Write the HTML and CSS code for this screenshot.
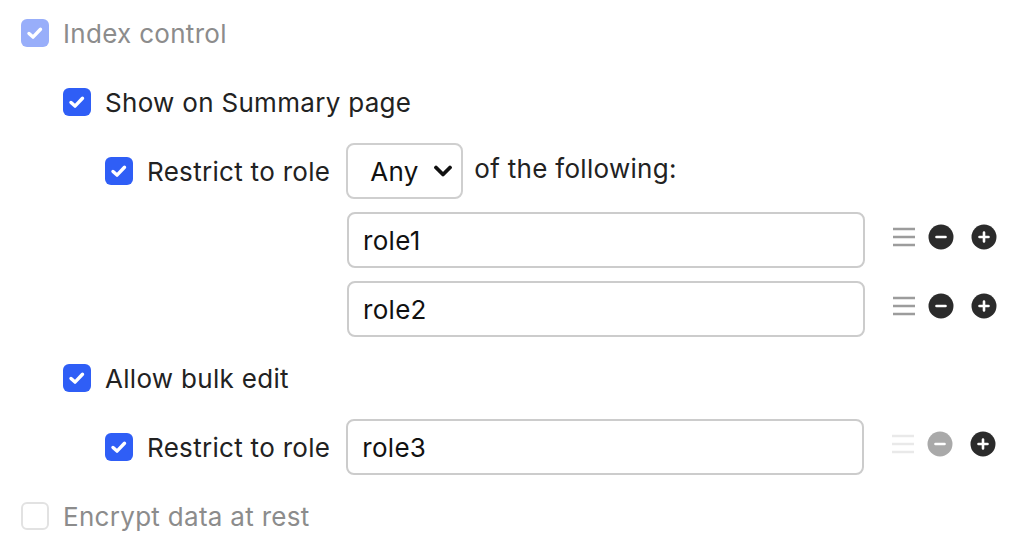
FILE: index.html
```html
<!DOCTYPE html>
<html>
<head>
<meta charset="utf-8">
<link rel="stylesheet" href="styles.css">
</head>
<body>
<div class="form">
  <div class="row lvl0 disabled">
    <span class="cb checked dim"><svg viewBox="0 0 28 28"><path d="M8 14.5l4 3.6 7.5-7.8" /></svg></span>
    <span class="label">Index control</span>
  </div>
  <div class="row lvl1">
    <span class="cb checked"><svg viewBox="0 0 28 28"><path d="M8 14.5l4 3.6 7.5-7.8" /></svg></span>
    <span class="label">Show on Summary page</span>
  </div>
  <div class="row lvl2">
    <span class="cb checked"><svg viewBox="0 0 28 28"><path d="M8 14.5l4 3.6 7.5-7.8" /></svg></span>
    <span class="label">Restrict to role</span>
    <span class="select"><span>Any</span><svg class="chev" viewBox="0 0 20 12"><path d="M3 2.5l7 7 7-7" /></svg></span>
    <span class="label after">of the following:</span>
  </div>
  <div class="row field-row">
    <span class="input">role1</span>
    <span class="tools">
      <svg class="grip" viewBox="0 0 22 20"><path d="M0 2h22M0 10h22M0 18h22" /></svg>
      <svg class="circ" viewBox="0 0 26 26"><circle cx="13" cy="13" r="12.5" /><path d="M8.5 13h9" /></svg>
      <svg class="circ" viewBox="0 0 26 26"><circle cx="13" cy="13" r="12.5" /><path d="M8.5 13h9M13 8.5v9" /></svg>
    </span>
  </div>
  <div class="row field-row">
    <span class="input">role2</span>
    <span class="tools">
      <svg class="grip" viewBox="0 0 22 20"><path d="M0 2h22M0 10h22M0 18h22" /></svg>
      <svg class="circ" viewBox="0 0 26 26"><circle cx="13" cy="13" r="12.5" /><path d="M8.5 13h9" /></svg>
      <svg class="circ" viewBox="0 0 26 26"><circle cx="13" cy="13" r="12.5" /><path d="M8.5 13h9M13 8.5v9" /></svg>
    </span>
  </div>
  <div class="row lvl1">
    <span class="cb checked"><svg viewBox="0 0 28 28"><path d="M8 14.5l4 3.6 7.5-7.8" /></svg></span>
    <span class="label">Allow bulk edit</span>
  </div>
  <div class="row lvl2">
    <span class="cb checked"><svg viewBox="0 0 28 28"><path d="M8 14.5l4 3.6 7.5-7.8" /></svg></span>
    <span class="label">Restrict to role</span>
    <span class="input inline">role3</span>
    <span class="tools">
      <svg class="grip faint" viewBox="0 0 22 20"><path d="M0 2h22M0 10h22M0 18h22" /></svg>
      <svg class="circ off" viewBox="0 0 26 26"><circle cx="13" cy="13" r="12.5" /><path d="M8.5 13h9" /></svg>
      <svg class="circ" viewBox="0 0 26 26"><circle cx="13" cy="13" r="12.5" /><path d="M8.5 13h9M13 8.5v9" /></svg>
    </span>
  </div>
  <div class="row lvl0 disabled">
    <span class="cb empty"></span>
    <span class="label">Encrypt data at rest</span>
  </div>
</div>
</body>
</html>
```

FILE: styles.css
```css
html, body {
  margin: 0;
  padding: 0;
  background: #ffffff;
}
body {
  font-family: Inter, "Noto Sans", "Liberation Sans", sans-serif;
  color: #222222;
  font-size: 26px;
  letter-spacing: 0.3px;
}
.form {
  display: flex;
  flex-direction: column;
  gap: 13px;
  padding: 5px 0 0 0;
}
.row {
  display: flex;
  align-items: center;
  height: 56px;
}
.lvl0 { padding-left: 21px; }
.lvl1 { padding-left: 63px; }
.lvl2 { padding-left: 105px; }
.field-row { padding-left: 347px; }
.cb {
  width: 28px;
  height: 28px;
  box-sizing: border-box;
  border-radius: 6px;
  flex: none;
  display: flex;
  align-items: center;
  justify-content: center;
  margin-right: 14px;
}
.cb.checked { background: #2f5ef6; }
.cb.checked.dim { background: #98aefa; }
.cb.empty { border: 2px solid #e2e2e2; background: #fff; }
.cb svg { width: 28px; height: 28px; }
.cb svg path {
  fill: none;
  stroke: #fff;
  stroke-width: 3.4;
  stroke-linecap: round;
  stroke-linejoin: round;
}
.label { white-space: nowrap; }
.disabled .label { color: #8c8c8c; }
.select {
  margin-left: 16px;
  width: 117px;
  height: 56px;
  box-sizing: border-box;
  border: 2px solid #cfcfcf;
  border-radius: 8px;
  display: flex;
  align-items: center;
  justify-content: space-between;
  padding: 0 8px 0 22px;
  color: #111;
  flex: none;
}
.chev { width: 20px; height: 12px; }
.chev path {
  fill: none;
  stroke: #111;
  stroke-width: 3.8;
  stroke-linecap: round;
  stroke-linejoin: round;
}
.after { margin-left: 11px; margin-top: -6px; }
.input {
  width: 518px;
  height: 56px;
  box-sizing: border-box;
  border: 2px solid #cccccc;
  border-radius: 8px;
  display: flex;
  align-items: center;
  padding-left: 14px;
  color: #111;
  flex: none;
}
.input.inline { margin-left: 16px; }
.tools {
  display: flex;
  align-items: center;
  margin-left: 28px;
  margin-bottom: 6px;
}
.grip { width: 22px; height: 20px; }
.grip path { stroke: #9c9c9c; stroke-width: 2.6; fill: none; }
.grip.faint path { stroke: #e9e9e9; }
.circ { width: 26px; height: 26px; margin-left: 13px; }
.circ + .circ { margin-left: 17px; }
.circ circle { fill: #2b2b2b; }
.circ.off circle { fill: #a9a9a9; }
.circ path {
  stroke: #fff;
  stroke-width: 2.6;
  stroke-linecap: round;
  fill: none;
}
```
